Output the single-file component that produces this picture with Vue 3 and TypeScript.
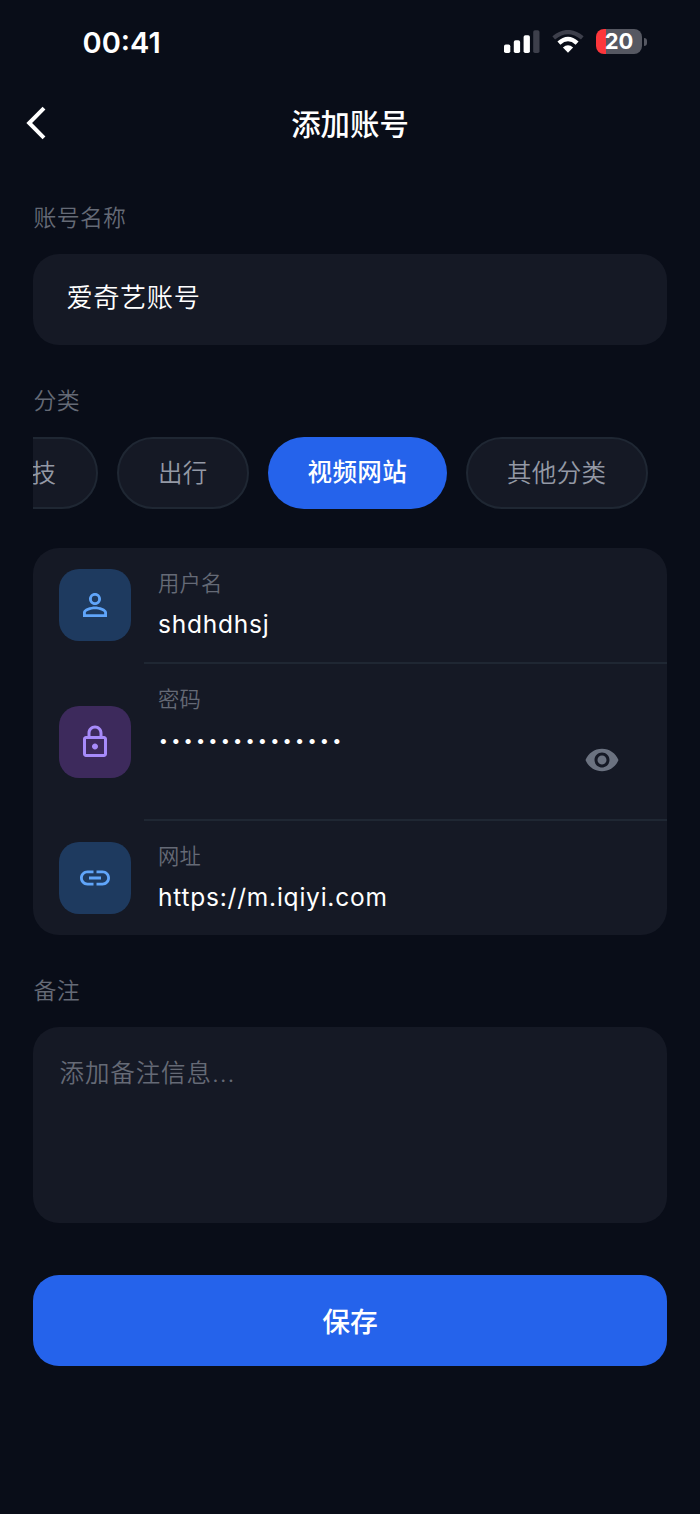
<script setup lang="ts">
import { ref } from 'vue'

interface Category {
  id: string
  name: string
}

const categories: Category[] = [
  { id: 'tech', name: '科技' },
  { id: 'travel', name: '出行' },
  { id: 'video', name: '视频网站' },
  { id: 'other', name: '其他分类' },
]
const selected = ref('video')
const password = '•'.repeat(15)
</script>

<template>
  <main class="screen">
    <div class="status">
      <time class="clock">00:41</time>
      <div class="indicators">
        <svg class="signal" width="36" height="24" viewBox="0 0 36 24">
          <rect x="0" y="14.5" width="6.3" height="8.5" rx="1.8" fill="#fff" />
          <rect x="9.8" y="10.3" width="6.3" height="12.7" rx="1.8" fill="#fff" />
          <rect x="19.6" y="5.2" width="6.3" height="17.8" rx="1.8" fill="#fff" />
          <rect x="29.2" y="0.2" width="6.3" height="22.8" rx="1.8" fill="#3d3f4b" />
        </svg>
        <svg class="wifi" width="32" height="24" viewBox="0 0 32 24">
          <path d="M1.7 7.9Q16 -3.8 30.3 7.9" fill="none" stroke="#3d3f4b" stroke-width="4.2" />
          <path d="M6.9 13.1Q16 5 25.1 13.1" fill="none" stroke="#fff" stroke-width="4.4" />
          <path d="M10.9 17.6Q16 13 21.1 17.6L16 22.8Z" fill="#fff" />
        </svg>
        <div class="battery">
          <span class="level">20</span>
          <i class="cap"></i>
        </div>
      </div>
    </div>

    <header class="header">
      <button class="back" aria-label="返回">
        <svg width="22" height="34" viewBox="0 0 22 34">
          <path d="M19 2.2L4.2 17L19 31.8" fill="none" stroke="#fff" stroke-width="4" />
        </svg>
      </button>
      <h1>添加账号</h1>
    </header>

    <div class="form">
      <div class="label">账号名称</div>
      <div class="field">爱奇艺账号</div>

      <div class="label category-label">分类</div>
      <div class="chips">
        <button
          v-for="item in categories"
          :key="item.id"
          class="chip"
          :class="{ active: item.id === selected }"
          @click="selected = item.id"
        >
          {{ item.name }}
        </button>
      </div>

      <section class="card">
        <div class="row first">
          <div class="tile blue">
            <svg width="36" height="36" viewBox="0 0 24 24">
              <path fill="currentColor" d="M12 5.9a2.1 2.1 0 1 1 0 4.2 2.1 2.1 0 0 1 0-4.2m0 9c2.97 0 6.1 1.46 6.1 2.1v1.1H5.9V17c0-.64 3.13-2.1 6.1-2.1M12 4C9.79 4 8 5.79 8 8s1.79 4 4 4 4-1.79 4-4-1.79-4-4-4m0 9c-2.67 0-8 1.34-8 4v3h16v-3c0-2.66-5.33-4-8-4" />
            </svg>
          </div>
          <div class="content">
            <div class="caption">用户名</div>
            <div class="value">shdhdhsj</div>
          </div>
        </div>
        <div class="row tall">
          <div class="tile purple">
            <svg width="36" height="36" viewBox="0 0 24 24">
              <path fill="currentColor" d="M18 8h-1V6c0-2.76-2.24-5-5-5S7 3.24 7 6v2H6c-1.1 0-2 .9-2 2v10c0 1.1.9 2 2 2h12c1.1 0 2-.9 2-2V10c0-1.1-.9-2-2-2M9 6c0-1.66 1.34-3 3-3s3 1.34 3 3v2H9zm9 14H6V10h12zm-6-3c1.1 0 2-.9 2-2s-.9-2-2-2-2 .9-2 2 .9 2 2 2" />
            </svg>
          </div>
          <div class="content">
            <div class="caption">密码</div>
            <div class="secret">
              <span class="dots">{{ password }}</span>
              <svg class="eye" width="36" height="36" viewBox="0 0 24 24">
                <path fill="currentColor" d="M12 4.5C7 4.5 2.73 7.61 1 12c1.73 4.39 6 7.5 11 7.5s9.27-3.11 11-7.5c-1.73-4.39-6-7.5-11-7.5M12 17c-2.76 0-5-2.24-5-5s2.24-5 5-5 5 2.24 5 5-2.24 5-5 5m0-8c-1.66 0-3 1.34-3 3s1.34 3 3 3 3-1.34 3-3-1.34-3-3-3" />
              </svg>
            </div>
          </div>
        </div>
        <div class="row last">
          <div class="tile blue">
            <svg width="36" height="36" viewBox="0 0 24 24">
              <path fill="currentColor" d="M3.9 12c0-1.71 1.39-3.1 3.1-3.1h4V7H7c-2.76 0-5 2.24-5 5s2.24 5 5 5h4v-1.9H7c-1.71 0-3.1-1.39-3.1-3.1M8 13h8v-2H8zm9-6h-4v1.9h4c1.71 0 3.1 1.39 3.1 3.1s-1.39 3.1-3.1 3.1h-4V17h4c2.76 0 5-2.24 5-5s-2.24-5-5-5" />
            </svg>
          </div>
          <div class="content">
            <div class="caption">网址</div>
            <div class="value">https://m.iqiyi.com</div>
          </div>
        </div>
      </section>

      <div class="label notes-label">备注</div>
      <div class="notes">添加备注信息...</div>

      <button class="save">保存</button>
    </div>
  </main>
</template>

<style>
body {
  margin: 0;
  background: #090d18;
}
</style>

<style scoped>
.screen {
  box-sizing: border-box;
  width: 700px;
  height: 1514px;
  overflow: hidden;
  background: #090d18;
  color: #fff;
  font-family: Inter, "Noto Sans CJK SC", sans-serif;
  font-weight: 350;
}

button {
  border: 0;
  padding: 0;
  background: none;
  color: inherit;
  font: inherit;
}

svg {
  display: block;
  flex: none;
}

.status {
  display: flex;
  justify-content: space-between;
  align-items: center;
  height: 83px;
  padding: 0 53px 0 82.5px;
}

.clock {
  padding-top: 2px;
  font-size: 29px;
  font-weight: 600;
  line-height: 40px;
}

.indicators {
  display: flex;
  align-items: center;
}

.wifi {
  margin-left: 12px;
}

.battery {
  position: relative;
  box-sizing: border-box;
  width: 46px;
  height: 25px;
  margin-left: 12px;
  margin-right: 5px;
  border-radius: 8px;
  background: linear-gradient(90deg, #fc363b 9.6px, #565862 9.6px);
  text-align: center;
}

.level {
  font-size: 22px;
  font-weight: 650;
  line-height: 25px;
}

.cap {
  position: absolute;
  left: 47.5px;
  top: 8.5px;
  width: 3px;
  height: 8px;
  border-radius: 0 4px 4px 0;
  background: #565862;
}

.header {
  display: grid;
  grid-template-columns: 60px 1fr 60px;
  align-items: center;
  height: 80px;
}

.back {
  padding-left: 25px;
}

h1 {
  margin: 0;
  padding-top: 3px;
  text-align: center;
  font-size: 29.4px;
  font-weight: 500;
  line-height: 40px;
}

.form {
  padding: 38px 33px 0;
}

.label {
  height: 34px;
  margin-bottom: 18.5px;
  padding-left: 0.5px;
  color: #656a76;
  font-size: 22.9px;
  line-height: 34px;
  letter-spacing: 0.3px;
}

.field {
  box-sizing: border-box;
  height: 91.5px;
  padding: 24px 33.5px;
  border-radius: 26px;
  background: #151925;
  font-size: 26.2px;
  line-height: 40px;
  letter-spacing: 0.6px;
}

.category-label {
  margin-top: 39px;
}

.chips {
  display: flex;
  justify-content: flex-end;
  gap: 19.4px;
  height: 72px;
  padding-right: 19.5px;
  overflow: hidden;
}

.chip {
  box-sizing: border-box;
  flex: none;
  height: 72px;
  padding: 0 39px 2px;
  border: 2px solid #1f2733;
  border-radius: 36px;
  background: #151925;
  color: #9499a5;
  font-size: 24.5px;
  letter-spacing: 0.4px;
}

.chip.active {
  padding: 0 39.4px 4px;
  border-width: 0;
  background: #2563eb;
  color: #fff;
  font-weight: 500;
}

.card {
  margin-top: 39.5px;
  height: 387px;
  border-radius: 26px;
  background: #151925;
  overflow: hidden;
}

.row {
  display: flex;
  align-items: center;
  height: 116px;
  padding-left: 26px;
}

.first .tile {
  margin-bottom: 2px;
}

.row.tall {
  height: 157px;
}

.row.tall .tile {
  margin-bottom: 2px;
}

.row.last {
  height: 114px;
}

.tile {
  display: flex;
  flex: none;
  align-items: center;
  justify-content: center;
  width: 72px;
  height: 72px;
  border-radius: 20px;
}

.blue {
  background: #1e3a5f;
  color: #60a5fa;
}

.purple {
  background: #3d2a5c;
  color: #a78bfa;
}

.content {
  box-sizing: border-box;
  flex: 1;
  align-self: stretch;
  margin-left: 13px;
  padding: 19px 0 0 14px;
  border-bottom: 2px solid #1f2733;
}

.row.last .content {
  border-bottom: 0;
}

.caption {
  height: 32px;
  color: #656a76;
  font-size: 21.3px;
  line-height: 32px;
  letter-spacing: 0.2px;
}

.value {
  margin-top: 7px;
  font-size: 24.5px;
  font-weight: 390;
  line-height: 36px;
  letter-spacing: 0.78px;
}

.secret {
  display: flex;
  justify-content: space-between;
  padding-right: 47.5px;
}

.dots {
  margin-top: 8px;
  font-size: 19px;
  line-height: 36px;
  letter-spacing: 1.7px;
}

.eye {
  margin-top: 27px;
  color: #6b7280;
}

.notes-label {
  margin-top: 39px;
}

.notes {
  box-sizing: border-box;
  height: 196px;
  padding: 28px 26.5px;
  border-radius: 26px;
  background: #151925;
  color: #656a76;
  font-size: 24.5px;
  line-height: 36px;
  letter-spacing: 0.9px;
}

.save {
  display: block;
  width: 100%;
  height: 91.5px;
  margin-top: 52px;
  border-radius: 26px;
  background: #2563eb;
  font-size: 27.8px;
  font-weight: 500;
  text-align: center;
}
</style>
